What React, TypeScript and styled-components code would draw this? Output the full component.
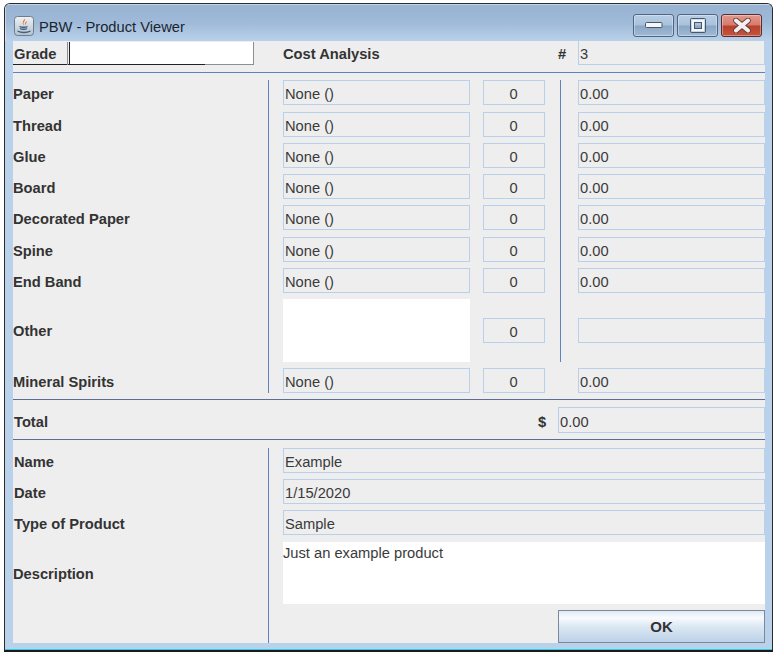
import React from 'react';
import styled, { createGlobalStyle } from 'styled-components';

const costRows = ['Paper', 'Thread', 'Glue', 'Board', 'Decorated Paper', 'Spine', 'End Band'];
const rowHeights = [32, 31, 31, 31, 32, 31, 31];

const GlobalStyle = createGlobalStyle`
  html, body {
    margin: 0;
    background: #ffffff;
  }
  body {
    font-family: 'Liberation Sans', Arial, sans-serif;
    font-size: 14.7px;
    color: #333333;
  }
`;

const Page = styled.div`
  width: 780px;
  height: 656px;
  padding: 3px 0 0 4px;
  box-sizing: border-box;
  overflow: hidden;
`;

const Frame = styled.div`
  width: 769px;
  height: 649px;
  box-sizing: border-box;
  border: 1px solid #2a2a2a;
  border-bottom: 2px solid #1a1a1a;
  border-radius: 6px 6px 0 0;
  background: #b9d1ea;
  box-shadow: inset 0 -1px 0 #2ad0e0;
  display: flex;
  flex-direction: column;
  overflow: hidden;
`;

const TitleBar = styled.div`
  height: 37px;
  flex: none;
  display: flex;
  align-items: flex-start;
  background: linear-gradient(to bottom, #98b3d1 0%, #9fbad8 50%, #b9d1ea 100%);
  box-shadow: inset 1px 1px 0 rgba(255, 255, 255, 0.45);
`;

const AppIcon = styled.svg`
  width: 20px;
  height: 20px;
  margin: 12px 0 0 9px;
  flex: none;
`;

const Title = styled.div`
  margin: 14px 0 0 5px;
  font-size: 14.7px;
  line-height: 18px;
  color: #1a2430;
`;

const Controls = styled.div`
  margin: 10px 0 0 auto;
  padding-right: 10px;
  display: flex;
  gap: 3px;
`;

const WinButton = styled.div<{ $close?: boolean }>`
  width: 41px;
  height: 23px;
  box-sizing: border-box;
  border: 1px solid ${(p) => (p.$close ? '#5a2a30' : '#4f6580')};
  border-radius: 3px;
  display: flex;
  align-items: center;
  justify-content: center;
  box-shadow: inset 0 0 0 1px rgba(255, 255, 255, 0.35);
  background: ${(p) =>
    p.$close
      ? 'linear-gradient(to bottom, #e09a8c 0%, #d67a6b 48%, #b8402a 52%, #c4553f 100%)'
      : 'linear-gradient(to bottom, #b7cde3 0%, #a9c2dc 48%, #8ba6c4 52%, #a0bad6 100%)'};
`;

const Body = styled.div`
  flex: 1;
  margin: 0 7px 7px 8px;
  background: #eeeeee;
  display: flex;
  flex-direction: column;
`;

const HeaderRow = styled.div`
  height: 24px;
  display: grid;
  grid-template-columns: 270px 275px 20px 187px;
  align-items: center;
`;

const Combo = styled.div`
  width: 241px;
  height: 24px;
  box-sizing: border-box;
  display: flex;
  background: linear-gradient(to right, #222222 192px, #8a8f96 192px) 0 22px / 100% 1px no-repeat;
`;

const ComboLabel = styled.div`
  width: 55px;
  height: 23px;
  box-sizing: border-box;
  padding-left: 1px;
  border-right: 1px solid #8a8f96;
  font-weight: 700;
  line-height: 24px;
`;

const ComboInput = styled.div`
  flex: 1;
  margin-left: 1px;
  height: 22px;
  background: #ffffff;
  border-left: 1px solid #222222;
  border-right: 1px solid #8a8f96;
`;

const Rule = styled.div<{ $top: number; $bottom: number; $dark?: boolean }>`
  height: 1px;
  flex: none;
  margin: ${(p) => p.$top}px 0 ${(p) => p.$bottom}px;
  background: ${(p) => (p.$dark ? '#5c6c92' : '#5f82c4')};
`;

const CostGrid = styled.div`
  display: grid;
  grid-template-columns: 255px 1px 14px 187px 13px 62px 15px 1px 17px 187px;
  grid-template-rows: ${rowHeights.map((h) => `${h}px`).join(' ')} 69px 25px;
`;

const Label = styled.div<{ $row?: number }>`
  grid-column: 1;
  grid-row: ${(p) => p.$row ?? 'auto'};
  height: 25px;
  line-height: 29px;
  font-weight: 700;
  white-space: nowrap;
  align-self: start;
`;

const OtherLabel = styled(Label)`
  margin-top: 18px;
`;

const Divider = styled.div<{ $column: number; $rows: string; $trim?: number }>`
  grid-column: ${(p) => p.$column};
  grid-row: ${(p) => p.$rows};
  margin-bottom: ${(p) => p.$trim ?? 0}px;
  background: #5f82c4;
`;

const Field = styled.div<{ $column?: number; $row?: number; $center?: boolean; $noTop?: boolean }>`
  grid-column: ${(p) => p.$column ?? 'auto'};
  grid-row: ${(p) => p.$row ?? 'auto'};
  height: 25px;
  box-sizing: border-box;
  border: 1px solid #b8d0ea;
  ${(p) => (p.$noTop ? 'border-top: 0; height: 24px;' : '')}
  padding-left: ${(p) => (p.$center ? 0 : 1)}px;
  padding-right: ${(p) => (p.$center ? 1 : 0)}px;
  line-height: 26px;
  color: #3a3a3a;
  white-space: nowrap;
  align-self: start;
  text-align: ${(p) => (p.$center ? 'center' : 'left')};
`;

const WhiteBox = styled.div`
  grid-column: 4;
  grid-row: 8;
  height: 63px;
  background: #ffffff;
`;

const OtherField = styled(Field)`
  margin-top: 19px;
`;

const HeadLabel = styled.div`
  font-weight: 700;
  line-height: 26px;
`;

const TotalRow = styled.div`
  height: 26px;
  display: flex;
  align-items: flex-start;
`;

const TotalLabel = styled.div`
  width: 525px;
  padding-left: 1px;
  box-sizing: border-box;
  font-weight: 700;
  line-height: 30px;
`;

const Dollar = styled.div`
  width: 20px;
  font-weight: 700;
  line-height: 30px;
`;

const TotalField = styled.div`
  width: 207px;
  height: 26px;
  box-sizing: border-box;
  border: 1px solid #b8d0ea;
  padding-left: 1px;
  line-height: 28px;
  color: #3a3a3a;
`;

const InfoGrid = styled.div`
  flex: 1;
  display: grid;
  grid-template-columns: 255px 1px 14px 482px;
  grid-template-rows: 31px 31px 32px 68px 33px;
`;

const InfoDivider = styled.div`
  grid-column: 2;
  grid-row: 1 / 6;
  background: #5f82c4;
`;

const InfoLabel = styled(Label)`
  padding-left: 1px;
`;

const DescriptionLabel = styled.div`
  grid-column: 1;
  grid-row: 4;
  height: 62px;
  line-height: 64px;
  font-weight: 700;
`;

const InfoField = styled(Field)`
  grid-column: 4;
`;

const TextArea = styled.div`
  grid-column: 4;
  grid-row: 4;
  height: 62px;
  background: #ffffff;
  line-height: 22px;
  color: #3a3a3a;
`;

const OkButton = styled.button`
  grid-column: 4;
  grid-row: 5;
  justify-self: end;
  width: 207px;
  height: 33px;
  box-sizing: border-box;
  border: 1px solid #7a8a9c;
  background: linear-gradient(to bottom, #dfe9f3 0%, #f8fbfe 22%, #dce8f3 50%, #bcd2e8 100%);
  font-family: 'Liberation Sans', Arial, sans-serif;
  font-size: 15px;
  font-weight: 700;
  color: #333333;
  padding: 0;
`;

export default function App() {
  return (
    <Page>
      <GlobalStyle />
      <Frame>
        <TitleBar>
          <AppIcon viewBox="0 0 20 20">
            <defs>
              <linearGradient id="iconBg" x1="0" y1="0" x2="0" y2="1">
                <stop offset="0" stopColor="#f0f2f4" />
                <stop offset="1" stopColor="#b4c0cc" />
              </linearGradient>
            </defs>
            <rect x="0.5" y="0.5" width="19" height="19" rx="3" fill="url(#iconBg)" stroke="#6f7c8a" />
            <path d="M10.5 2.5 C12 5 8 6 10 9.5 C7.5 7.5 9.5 5 10.5 2.5 Z M13 5 C13 7 11 7.5 11.5 9.5 C10.5 8 11 6 13 5 Z" fill="#e2662a" />
            <path d="M5.5 10.5 C7 11.5 12 11.5 13.5 10.5 M6 12.5 C7.5 13.5 11.5 13.5 13 12.5 M3.5 15 C7 17 13 17 16.5 15" fill="none" stroke="#3f5f80" strokeWidth="1.3" />
          </AppIcon>
          <Title>PBW - Product Viewer</Title>
          <Controls>
            <WinButton>
              <svg width="18" height="7" viewBox="0 0 18 7">
                <rect x="0.5" y="0.5" width="16.5" height="5" rx="1" fill="#f4f6f8" stroke="#44566a" />
              </svg>
            </WinButton>
            <WinButton>
              <svg width="18" height="15" viewBox="0 0 18 15">
                <rect x="1.5" y="0.5" width="15" height="14" rx="1" fill="none" stroke="#44566a" strokeWidth="1" />
                <rect x="4" y="3" width="10" height="9" fill="none" stroke="#f4f6f8" strokeWidth="3" />
                <rect x="5.5" y="4.5" width="7" height="6" fill="none" stroke="#44566a" strokeWidth="1" />
              </svg>
            </WinButton>
            <WinButton $close>
              <svg width="20" height="15" viewBox="0 0 20 15">
                <path d="M4 2.5 L16 12.5 M16 2.5 L4 12.5" stroke="#5a3a3a" strokeWidth="5.6" strokeLinecap="round" />
                <path d="M4 2.5 L16 12.5 M16 2.5 L4 12.5" stroke="#f4eeee" strokeWidth="4" strokeLinecap="round" />
              </svg>
            </WinButton>
          </Controls>
        </TitleBar>
        <Body>
          <HeaderRow>
            <Combo>
              <ComboLabel>Grade</ComboLabel>
              <ComboInput />
            </Combo>
            <HeadLabel>Cost Analysis</HeadLabel>
            <HeadLabel>#</HeadLabel>
            <Field $noTop>3</Field>
          </HeaderRow>
          <Rule $top={7} $bottom={7} />
          <CostGrid>
            <Divider $column={2} $rows="1 / 10" />
            <Divider $column={8} $rows="1 / 9" $trim={6} />
            {costRows.map((name, i) => (
              <React.Fragment key={name}>
                <Label $row={i + 1}>{name}</Label>
                <Field $column={4} $row={i + 1}>None ()</Field>
                <Field $column={6} $row={i + 1} $center>0</Field>
                <Field $column={10} $row={i + 1}>0.00</Field>
              </React.Fragment>
            ))}
            <OtherLabel $row={8}>Other</OtherLabel>
            <WhiteBox />
            <OtherField $column={6} $row={8} $center>0</OtherField>
            <OtherField $column={10} $row={8} />
            <Label $row={9}>Mineral Spirits</Label>
            <Field $column={4} $row={9}>None ()</Field>
            <Field $column={6} $row={9} $center>0</Field>
            <Field $column={10} $row={9}>0.00</Field>
          </CostGrid>
          <Rule $top={6} $bottom={7} $dark />
          <TotalRow>
            <TotalLabel>Total</TotalLabel>
            <Dollar>$</Dollar>
            <TotalField>0.00</TotalField>
          </TotalRow>
          <Rule $top={6} $bottom={8} $dark />
          <InfoGrid>
            <InfoDivider />
            <InfoLabel $row={1}>Name</InfoLabel>
            <InfoField $row={1}>Example</InfoField>
            <InfoLabel $row={2}>Date</InfoLabel>
            <InfoField $row={2}>1/15/2020</InfoField>
            <InfoLabel $row={3}>Type of Product</InfoLabel>
            <InfoField $row={3}>Sample</InfoField>
            <DescriptionLabel>Description</DescriptionLabel>
            <TextArea>Just an example product</TextArea>
            <OkButton>OK</OkButton>
          </InfoGrid>
        </Body>
      </Frame>
    </Page>
  );
}
